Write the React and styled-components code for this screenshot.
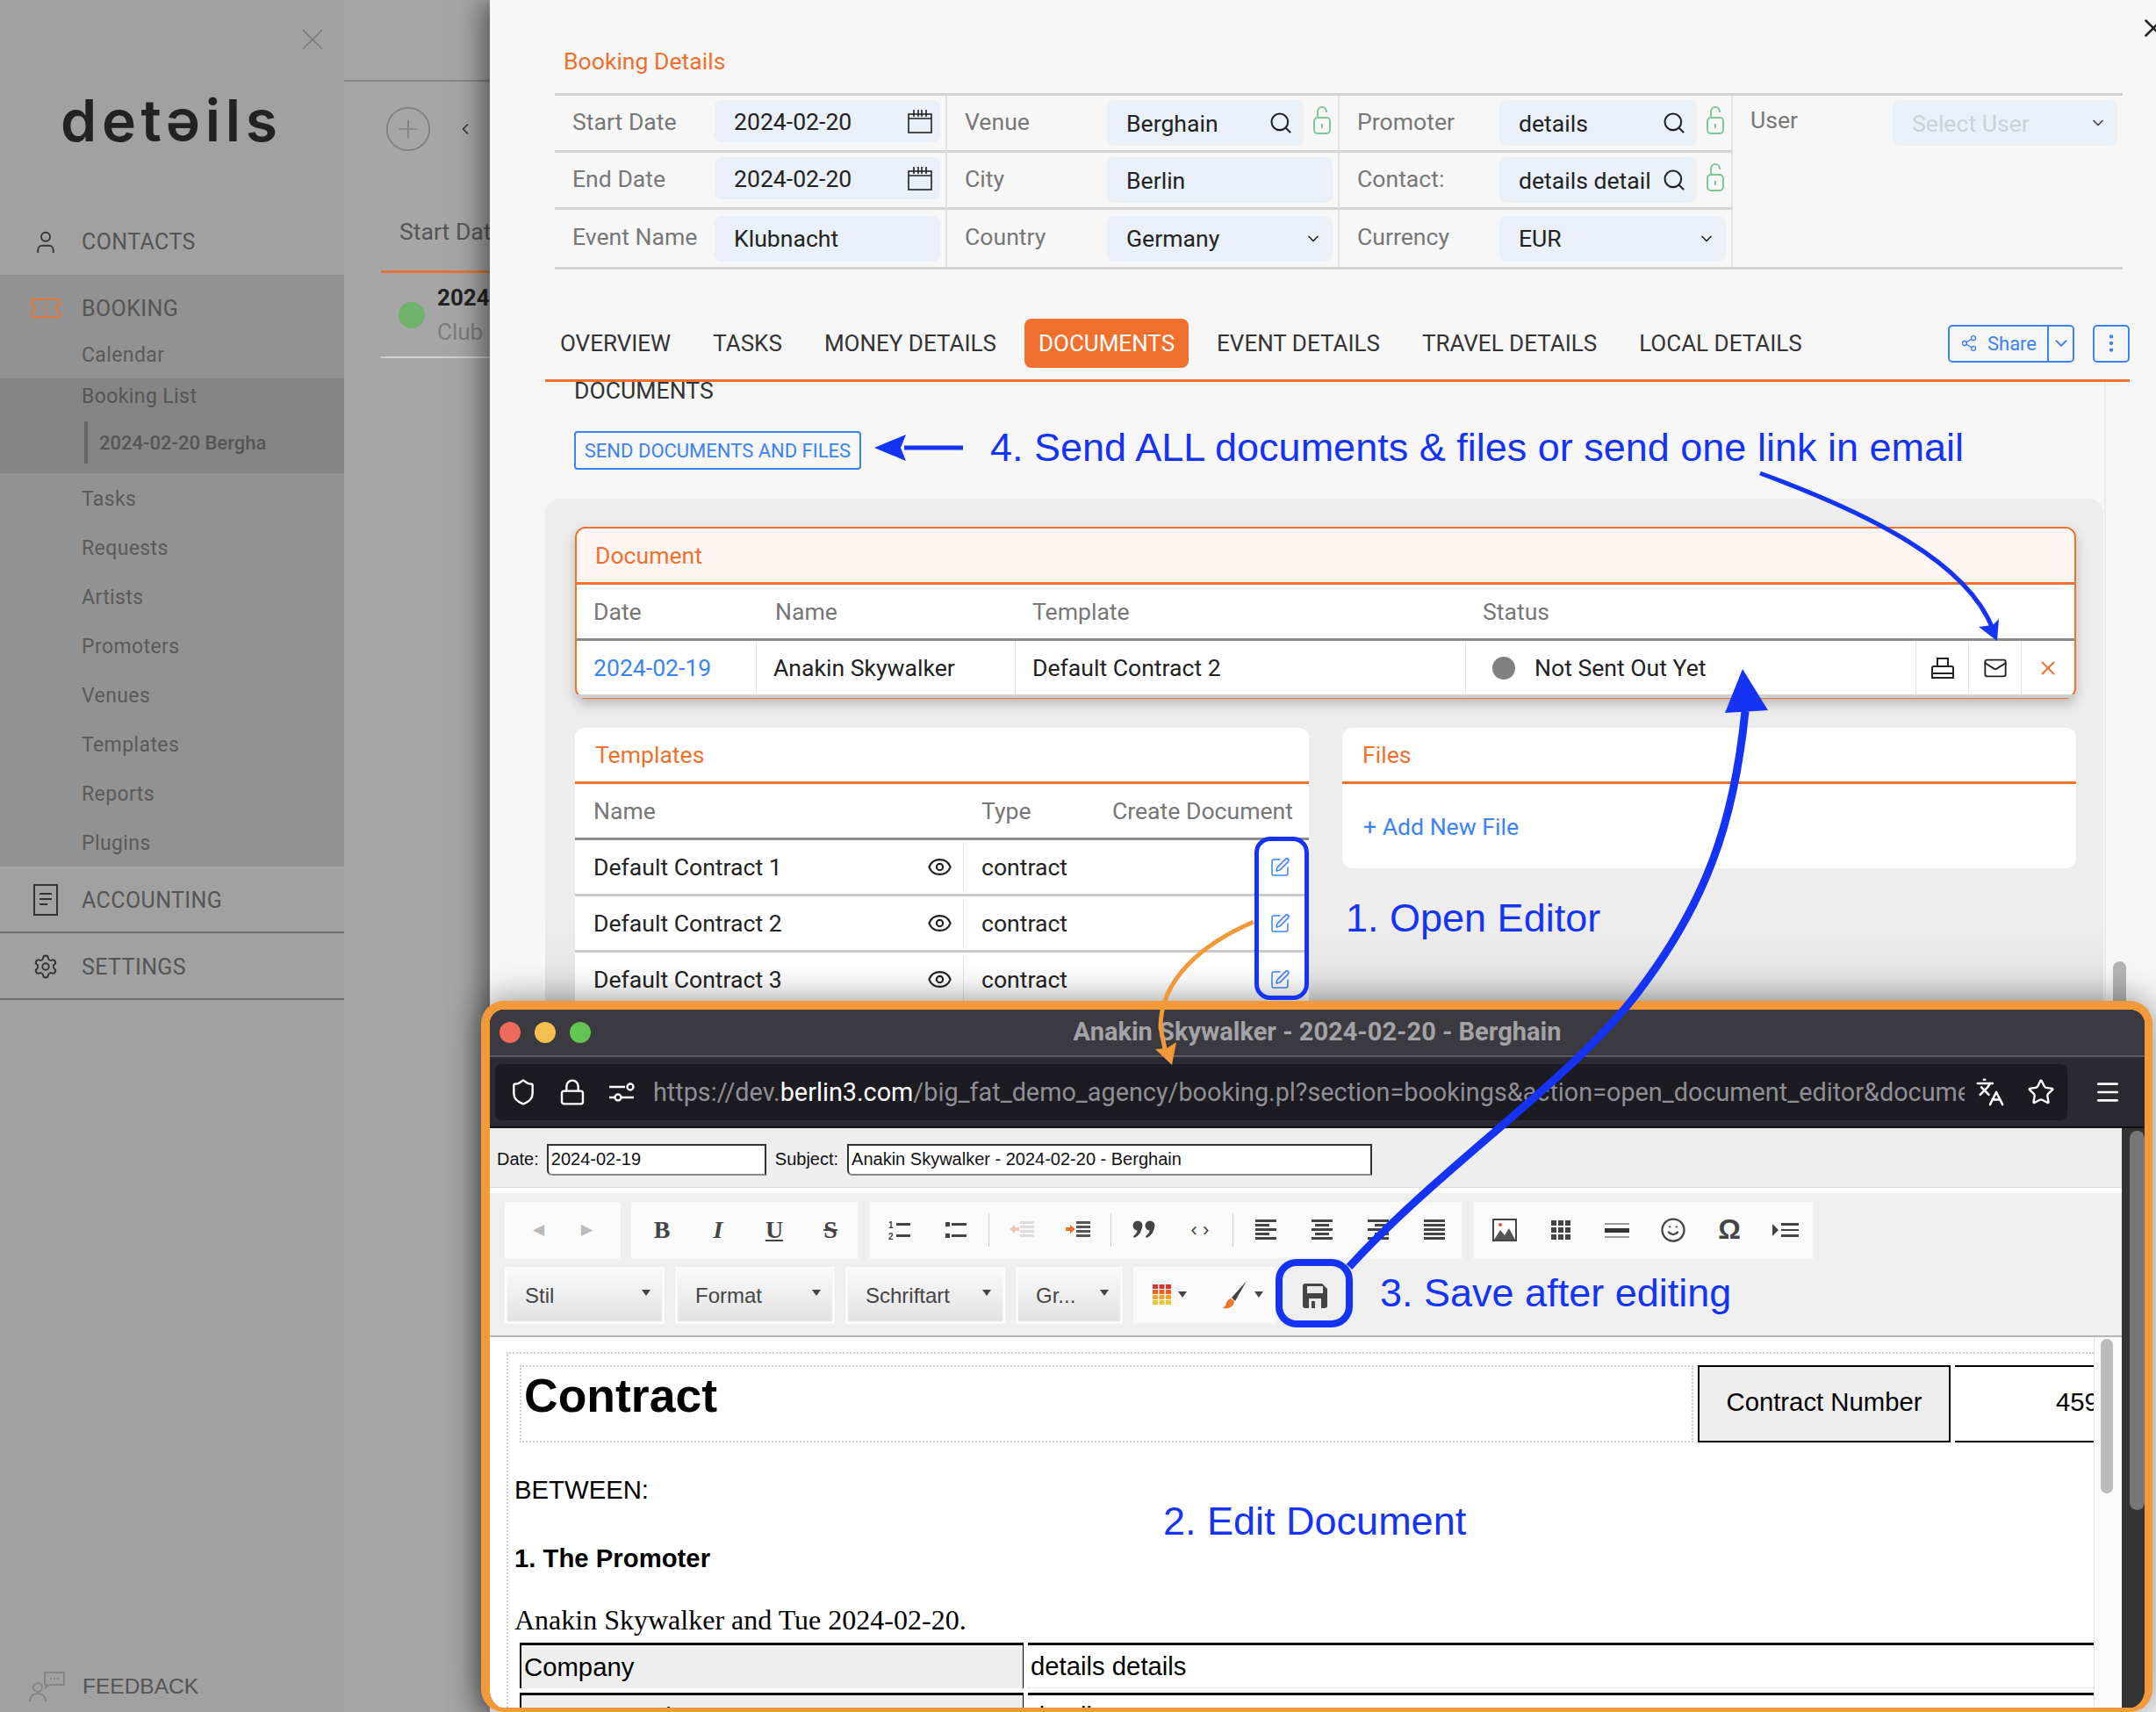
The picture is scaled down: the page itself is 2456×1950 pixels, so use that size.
import React from "react";
import styled, { createGlobalStyle } from "styled-components";
import {
  X, User, Settings, CirclePlus, ChevronLeft, ChevronDown, Search, Share2, EllipsisVertical,
  Mail, SquarePen, Eye, Shield, Lock, Languages, Star, Menu, Smile,
} from "lucide-react";

const BLUE = "#1433f5";
const LINK = "#3b82f6";
const ORANGE = "#f0702e";

const Global = createGlobalStyle`
  html, body { margin: 0; padding: 0; width: 2456px; height: 1950px; overflow: hidden; background: #f7f7f7; }
  * { box-sizing: border-box; }
  body { font-family: Roboto, "Liberation Sans", sans-serif; }
`;

const Page = styled.div`
  position: relative;
  width: 2456px;
  height: 1950px;
  display: flex;
  overflow: hidden;
`;

/* ---------- sidebar ---------- */
const Sidebar = styled.aside`
  width: 392px;
  height: 1950px;
  flex: none;
  display: flex;
  flex-direction: column;
  background: #a1a1a1;
  color: #555;
`;
const SideClose = styled.div`
  height: 60px;
  padding: 24px 15px 0 0;
  display: flex;
  justify-content: flex-end;
  color: #7d7d7d;
`;
const Logo = styled.div`
  height: 176px;
  padding: 39px 0 0 69px;
  font-family: Inter, sans-serif;
  font-weight: 600;
  font-size: 66px;
  line-height: 76px;
  letter-spacing: 5.7px;
  color: #222;
`;
const NavRow = styled.div`
  height: ${(p) => p.$h || 76}px;
  padding-top: ${(p) => p.$pt || 2}px;
  flex: none;
  display: flex;
  align-items: center;
  font-size: 25px;
  letter-spacing: 0.4px;
  border-bottom: ${(p) => (p.$line ? "2px solid #6e6e6e" : "none")};
`;
const NavIcon = styled.span`
  width: 93px;
  flex: none;
  display: flex;
  justify-content: center;
  padding-left: 11px;
  color: ${(p) => p.$c || "#333"};
`;
const BookingGroup = styled.div`
  background: #929292;
  height: 674px;
  flex: none;
`;
const SubItem = styled.div`
  height: ${(p) => p.$h || 56}px;
  padding: 2px 0 ${(p) => p.$pb || 0}px 93px;
  display: flex;
  align-items: center;
  font-size: 23px;
  letter-spacing: 0.4px;
  color: #5a5a5a;
`;
const ActiveBlock = styled.div`
  height: 108px;
  background: #858585;
  padding-left: 93px;
  color: #555;
`;
const ActiveTitle = styled.div`
  height: 40px;
  display: flex;
  align-items: center;
  font-size: 23px;
  letter-spacing: 0.4px;
`;
const ActiveChild = styled.div`
  margin: 9px 0 0 3px;
  height: 48px;
  border-left: 4px solid #666;
  padding-left: 13px;
  display: flex;
  align-items: center;
  font-size: 22px;
  font-weight: 500;
  white-space: nowrap;
`;
const Feedback = styled.div`
  margin-top: auto;
  height: 58px;
  display: flex;
  align-items: center;
  padding-left: 33px;
  gap: 19px;
  font-family: "Liberation Sans", sans-serif;
  font-size: 24.5px;
  color: #555;
`;

/* ---------- list pane behind ---------- */
const ListPane = styled.section`
  width: 166px;
  flex: none;
  height: 1950px;
  background: #a6a6a6;
  overflow: hidden;
  white-space: nowrap;
`;
const ListTop = styled.div`
  height: 93px;
  border-bottom: 2px solid #858585;
`;
const ListTools = styled.div`
  height: 108px;
  display: flex;
  align-items: center;
  padding-left: 44px;
  gap: 26px;
  color: #808080;
`;
const ListHead = styled.div`
  height: 110px;
  margin-left: 42px;
  width: 200px;
  padding: 47px 0 0 21px;
  border-bottom: 3px solid #e0763a;
  font-size: 26.6px;
  color: #555;
`;
const ListItem = styled.div`
  margin-left: 42px;
  width: 200px;
  height: 97px;
  border-bottom: 2px solid #cfcfcf;
  display: flex;
  align-items: center;
  padding-left: 20px;
  gap: 14px;
`;
const Dot = styled.span`
  width: ${(p) => p.$s}px;
  height: ${(p) => p.$s}px;
  flex: none;
  border-radius: 50%;
  margin-left: ${(p) => p.$ml || 0}px;
  background: ${(p) => p.$c};
`;
const ListText = styled.div`
  padding-top: 2px;
`;
const ListDate = styled.div`
  font-size: 26px;
  font-weight: 700;
  color: #222;
  line-height: 36px;
`;
const ListSub = styled.div`
  font-size: 26px;
  color: #7d7d7d;
  line-height: 42px;
`;

/* ---------- main panel ---------- */
const Panel = styled.main`
  position: relative;
  z-index: 1;
  flex: 1;
  height: 1950px;
  background: #f7f7f7;
  overflow: hidden;
  padding-top: 50px;
  box-shadow: -8px 0 30px rgba(0, 0, 0, 0.5);
`;
const CloseCorner = styled.div`
  position: absolute;
  right: -14px;
  top: 15px;
  color: #222;
`;
const PanelTitle = styled.h2`
  margin: 0 0 16px 84px;
  height: 40px;
  font-weight: 400;
  font-size: 26.6px;
  line-height: 40px;
  color: ${ORANGE};
`;
const FieldGrid = styled.div`
  margin-left: 74px;
  width: 1786px;
  display: grid;
  grid-template-columns: 447px 447px 448px 1fr;
  grid-template-rows: repeat(3, 65px);
  border-top: 3px solid #d4d4d4;
  border-bottom: 3px solid #d4d4d4;
`;
const Cell = styled.div`
  display: flex;
  align-items: center;
  padding: 0 6px 0 20px;
  border-right: ${(p) => (p.$last ? "none" : "2px solid #e2e2e2")};
  border-bottom: ${(p) => (p.$end ? "none" : "3px solid #d4d4d4")};
`;
const UserCell = styled(Cell)`
  grid-column: 4;
  grid-row: 1 / span 3;
  align-items: flex-start;
  padding-top: 5px;
`;
const Label = styled.span`
  width: 162px;
  flex: none;
  margin-bottom: 4px;
  font-size: 26.6px;
  color: #777;
`;
const UserLabel = styled(Label)`
  line-height: 46px;
`;
const Input = styled.div`
  flex: 1;
  min-width: 0;
  height: ${(p) => (p.$date ? 48 : 52)}px;
  margin-bottom: ${(p) => (p.$date ? 4 : 0)}px;
  display: flex;
  align-items: center;
  justify-content: space-between;
  padding: 0 ${(p) => (p.$date ? 8 : 12)}px 0 22px;
  border-radius: 8px;
  background: #eaf0f7;
  font-size: 26.6px;
  color: ${(p) => (p.$muted ? "#cdd2d8" : "#222")};
  white-space: nowrap;
`;
const LockSlot = styled.span`
  width: 33px;
  flex: none;
  display: flex;
  justify-content: flex-end;
  padding-right: 1px;
  margin-bottom: 8px;
`;
const TabBar = styled.nav`
  margin: 56px 0 0 63px;
  width: 1805px;
  height: 72px;
  display: flex;
  align-items: center;
  gap: 16px;
  padding: 0 0 13px 1px;
  border-bottom: 3px solid ${ORANGE};
`;
const Tab = styled.div`
  height: 56px;
  display: flex;
  align-items: center;
  padding: 0 16px;
  border-radius: 8px;
  font-size: 26px;
  white-space: nowrap;
  color: ${(p) => (p.$active ? "#fff" : "#333")};
  background: ${(p) => (p.$active ? ORANGE : "transparent")};
`;
const TabTools = styled.div`
  margin-left: auto;
  display: flex;
  gap: 21px;
  color: ${LINK};
`;
const ShareBtn = styled.div`
  height: 43px;
  width: 144px;
  display: flex;
  align-items: center;
  border: 2px solid ${LINK};
  border-radius: 5px;
  font-size: 22px;
`;
const SharePart = styled.span`
  flex: 1;
  display: flex;
  align-items: center;
  justify-content: center;
  gap: 11px;
`;
const ShareCaret = styled.span`
  width: 29px;
  height: 100%;
  flex: none;
  display: flex;
  align-items: center;
  justify-content: center;
  border-left: 2px solid ${LINK};
`;
const MoreBtn = styled.div`
  width: 42px;
  height: 43px;
  display: flex;
  align-items: center;
  justify-content: center;
  border: 2px solid ${LINK};
  border-radius: 5px;
`;
const Body = styled.div`
  margin-left: 63px;
  width: 1778px;
  border-right: 2px solid #ececec;
  height: 900px;
`;
const DocHeading = styled.div`
  padding-left: 33px;
  height: 22px;
  line-height: 20px;
  font-size: 26.6px;
  color: #333;
`;
const SendBtn = styled.div`
  margin: 34px 0 33px 33px;
  width: 327px;
  height: 44px;
  display: flex;
  align-items: center;
  justify-content: center;
  border: 2px solid ${LINK};
  border-radius: 4px;
  color: ${LINK};
  font-size: 22px;
  white-space: nowrap;
`;
const GreyBox = styled.div`
  width: 1775px;
  height: 620px;
  padding: 32px 31px 0 34px;
  border-radius: 16px;
  background: linear-gradient(#ededed 0, #ededed 480px, #dcdcdc 100%);
`;
const Card = styled.div`
  background: #fff;
  border-radius: 12px;
  overflow: hidden;
  flex: ${(p) => p.$flex || "none"};
`;
const DocCard = styled(Card)`
  border: 2px solid ${ORANGE};
  height: 196px;
  box-shadow: 0 6px 14px rgba(0, 0, 0, 0.22);
  overflow: visible;
`;
const CardHeader = styled.div`
  height: 64px;
  display: flex;
  align-items: center;
  padding-left: ${(p) => p.$pad || 23}px;
  border-bottom: 3px solid ${ORANGE};
  font-size: 26.6px;
  color: ${ORANGE};
  background: ${(p) => p.$bg || "#fff"};
  border-radius: ${(p) => (p.$bg ? "10px 10px 0 0" : "0")};
`;
const DocGrid = styled.div`
  display: grid;
  grid-template-columns: 205px 295px 513px 513px 60px 60px 1fr;
`;
const Th = styled.div`
  height: 64px;
  display: flex;
  align-items: center;
  padding-left: ${(p) => (p.$end ? 0 : p.$pl || 19)}px;
  font-size: 26.6px;
  color: #777;
  white-space: nowrap;
  border-bottom: 3px solid #8c8c8c;
  justify-content: ${(p) => (p.$end ? "flex-end" : "flex-start")};
  padding-right: ${(p) => (p.$end ? "18px" : "0")};
`;
const Td = styled.div`
  height: 65px;
  display: flex;
  align-items: center;
  padding-left: ${(p) => (p.$icon ? "0" : "19px")};
  justify-content: ${(p) => (p.$icon ? "center" : "flex-start")};
  gap: 22px;
  font-size: 26.6px;
  color: ${(p) => p.$c || "#222"};
  border-right: ${(p) => (p.$last ? "none" : "1px solid #e6e6e6")};
  border-bottom: 4px solid #cfcfcf;
`;
const Lower = styled.div`
  display: flex;
  gap: 38px;
  margin-top: 33px;
  align-items: flex-start;
`;
const TemplatesCard = styled(Card)`
  width: 836px;
  height: 360px;
  border-radius: 12px 12px 0 0;
`;
const TplGrid = styled.div`
  display: grid;
  grid-template-columns: 442px 1fr 226px;
`;
const TplCell = styled.div`
  height: 64px;
  display: flex;
  align-items: center;
  justify-content: ${(p) => p.$j || "flex-start"};
  padding: ${(p) => p.$p || "0 0 0 21px"};
  font-size: 26.6px;
  color: #222;
  border-bottom: 3px solid #c9c9c9;
  position: relative;
`;
const TplSep = styled.span`
  margin-left: -21px;
  margin-right: 20px;
  width: 1px;
  height: 50px;
  background: #e4e4e4;
`;
const FilesCard = styled(Card)`
  height: 160px;
`;
const AddFile = styled.div`
  padding: 33px 0 0 24px;
  font-size: 26.6px;
  color: ${LINK};
`;
const ScrollThumb = styled.div`
  position: absolute;
  z-index: 2;
  left: 2407px;
  top: 1095px;
  width: 15px;
  height: 60px;
  border-radius: 8px;
  background: #b5b5b5;
`;

/* ---------- popup window ---------- */
const Popup = styled.div`
  position: absolute;
  z-index: 5;
  left: 548px;
  top: 1140px;
  width: 1904px;
  height: 810px;
  border: solid #f2993a;
  border-width: 10px 9px 5px 10px;
  border-radius: 26px;
  background: #2b2a33;
  overflow: hidden;
  box-shadow: 0 0 40px rgba(0, 0, 0, 0.45);
  display: flex;
  flex-direction: column;
`;
const TitleBar = styled.div`
  height: 54px;
  flex: none;
  position: relative;
  background: #3b3a40;
  border-bottom: 2px solid #5a5a60;
  display: flex;
  align-items: center;
  justify-content: center;
  padding-bottom: 2px;
  font-size: 29px;
  font-weight: 700;
  color: #a3a3a6;
`;
const Lights = styled.div`
  position: absolute;
  left: 11px;
  top: 14px;
  display: flex;
  gap: 16px;
`;
const UrlRow = styled.div`
  height: 81px;
  flex: none;
  display: flex;
  align-items: center;
  padding: 0 6px;
  background: #2b2a33;
  border-bottom: 2px solid #111;
  color: #fff;
`;
const UrlBar = styled.div`
  width: 1791px;
  height: 64px;
  display: flex;
  align-items: center;
  padding-left: 4px;
  border-radius: 8px;
  background: #1c1b22;
`;
const UrlSlot = styled.span`
  width: ${(p) => p.$w || 56}px;
  flex: none;
  display: flex;
  justify-content: center;
`;
const UrlText = styled.div`
  flex: 1;
  min-width: 0;
  overflow: hidden;
  white-space: nowrap;
  margin-left: 8px;
  font-size: 28.8px;
  color: #8f8f94;
`;
const UrlDomain = styled.span`
  color: #fff;
`;
const HamburgerSlot = styled.span`
  flex: 1;
  padding-left: 9px;
  display: flex;
  justify-content: center;
`;
const PopBody = styled.div`
  flex: 1;
  min-height: 0;
  display: flex;
`;
const PopMain = styled.div`
  flex: 1;
  min-width: 0;
  display: flex;
  flex-direction: column;
  background: #eee;
  font-family: "Liberation Sans", sans-serif;
`;
const OuterScroll = styled.div`
  width: 26px;
  flex: none;
  background: #333;
  padding: 3px 0 0 9px;
`;
const OuterThumb = styled.div`
  width: 17px;
  height: 432px;
  border-radius: 9px;
  background: #777;
`;
const FormRow = styled.div`
  height: 68px;
  flex: none;
  display: flex;
  align-items: center;
  padding: 4px 0 0 8px;
  font-size: 20px;
  color: #111;
  border-bottom: 1px solid #ddd;
`;
const FormLabel = styled.span`
  flex: none;
  margin-left: ${(p) => p.$ml || 0}px;
`;
const FormInput = styled.div`
  width: ${(p) => p.$w}px;
  height: 36px;
  margin: ${(p) => p.$m};
  display: flex;
  align-items: center;
  padding-left: 3px;
  background: #fff;
  border: 2px solid #333;
  border-bottom-color: #888;
  border-bottom-left-radius: 6px;
  font-size: 20px;
  color: #111;
`;
const WhiteBand = styled.div`
  height: 6px;
  flex: none;
  background: #fff;
`;
const EditorBar = styled.div`
  height: 162px;
  flex: none;
  padding: 10px 0 0 17px;
  background: #efefef;
  display: flex;
  flex-direction: column;
  gap: 9px;
`;
const BarRow = styled.div`
  display: flex;
  gap: 12px;
  height: 65px;
`;
const BtnGroup = styled.div`
  display: flex;
  align-items: center;
  background: #fafafa;
  border-bottom: 2px solid #f6f6f6;
  padding: ${(p) => p.$p || "0 1px"};
`;
const TbBtn = styled.span`
  width: ${(p) => p.$w || 64}px;
  height: 100%;
  flex: none;
  display: flex;
  align-items: center;
  justify-content: center;
  color: ${(p) => p.$c || "#444"};
  font-family: ${(p) => (p.$serif ? '"Liberation Serif", serif' : '"Liberation Sans", sans-serif')};
  font-size: ${(p) => p.$fs || 28}px;
  font-weight: ${(p) => (p.$b ? 700 : 400)};
  font-style: ${(p) => (p.$i ? "italic" : "normal")};
`;
const Deco = styled.span`
  text-decoration: ${(p) => p.$d};
  font-weight: 700;
`;
const TbSep = styled.span`
  width: 1px;
  height: 38px;
  margin: 0 5px;
  flex: none;
  background: #ccc;
`;
const Combo = styled.div`
  width: ${(p) => p.$w}px;
  height: 65px;
  position: relative;
  padding: 0 0 0 20px;
  display: flex;
  align-items: center;
  font-size: 24px;
  color: #444;
  background: linear-gradient(#fafafa, #e2e2e2);
  border: 3px solid #fafafa;
`;
const Caret = styled.span`
  width: 0;
  height: 0;
  border-left: 5px solid transparent;
  border-right: 5px solid transparent;
  border-top: 7px solid ${(p) => p.$c || "#444"};
  flex: none;
`;
const ComboCaret = styled(Caret)`
  position: absolute;
  right: 13px;
  top: 23px;
`;
const ColorGroup = styled(BtnGroup)`
  width: 162px;
  gap: 7px;
  padding-left: 22px;
`;
const ColorSpacer = styled.span`
  width: 26px;
  flex: none;
`;
const SaveSlot = styled.span`
  margin-left: -3px;
  width: 72px;
  display: flex;
  align-items: center;
  justify-content: center;
`;
const EditorRule = styled.div`
  height: 2px;
  flex: none;
  background: #b5b5b5;
`;
const DocArea = styled.div`
  flex: 1;
  min-height: 0;
  display: flex;
  background: #fff;
  color: #000;
`;
const DocPage = styled.div`
  flex: 1;
  min-width: 0;
  overflow: hidden;
  padding: 17px 0 0 19px;
  white-space: nowrap;
`;
const Dotted = styled.div`
  border-top: 2px dotted #ccc;
  border-left: 2px dotted #ccc;
  padding: 13px 0 0 7px;
  height: 420px;
`;
const HeadTable = styled.div`
  margin-left: 6px;
  height: 90px;
  width: 1830px;
  display: flex;
  gap: 5px;
`;
const HeadMain = styled.div`
  width: 1337px;
  height: 88px;
  border: 2px dotted #ccc;
  padding: 8px 0 0 3px;
  font-size: 53.5px;
  font-weight: 700;
  line-height: 50px;
`;
const HeadLabel = styled.div`
  width: 288px;
  height: 88px;
  padding-bottom: 4px;
  display: flex;
  align-items: center;
  justify-content: center;
  background: #eee;
  border: 2px solid #000;
  font-size: 29.3px;
`;
const HeadValue = styled.div`
  flex: 1;
  height: 88px;
  border: solid #000;
  border-width: 2px 0;
  padding: 0 0 4px 115px;
  display: flex;
  align-items: center;
  font-size: 29.3px;
`;
const Para = styled.div`
  height: 40px;
  margin-top: ${(p) => p.$mt}px;
  line-height: 40px;
  font-size: ${(p) => p.$fs || 29.3}px;
  font-weight: ${(p) => (p.$b ? 700 : 400)};
  font-family: ${(p) => (p.$serif ? '"Liberation Serif", serif' : "inherit")};
`;
const KvRow = styled.div`
  margin: ${(p) => p.$m};
  display: flex;
  gap: 5px;
  height: 52px;
  font-size: 29.3px;
`;
const KvKey = styled.div`
  width: 574px;
  flex: none;
  padding-left: 3px;
  display: flex;
  align-items: center;
  background: #eee;
  border: solid #000;
  border-width: 3px 1px 0 2px;
`;
const KvVal = styled.div`
  flex: 1;
  padding-left: 3px;
  display: flex;
  align-items: center;
  border-top: 3px solid #000;
  border-bottom: 1px dotted #ccc;
`;
const InnerScroll = styled.div`
  width: 32px;
  flex: none;
  background: #fafafa;
  border-left: 1px solid #e4e4e4;
  padding: 2px 0 0 7px;
`;
const InnerThumb = styled.div`
  width: 14px;
  height: 176px;
  border-radius: 7px;
  background: #bcbcbc;
`;

/* ---------- annotations ---------- */
const Note = styled.div`
  position: absolute;
  z-index: 7;
  left: ${(p) => p.$x}px;
  top: ${(p) => p.$y}px;
  font-family: "Liberation Sans", sans-serif;
  font-size: 45px;
  line-height: 56px;
  color: ${BLUE};
  white-space: nowrap;
`;
const Highlight = styled.div`
  position: absolute;
  z-index: 6;
  left: ${(p) => p.$x}px;
  top: ${(p) => p.$y}px;
  width: ${(p) => p.$w}px;
  height: ${(p) => p.$h}px;
  border: ${(p) => p.$b}px solid ${BLUE};
  border-radius: ${(p) => p.$r}px;
`;
const Arrows = styled.svg`
  position: absolute;
  z-index: 6;
  left: 0;
  top: 0;
  pointer-events: none;
`;

/* ---------- small drawn icons ---------- */
const Ticket = () => (
  <svg width="34" height="24" viewBox="0 0 34 24" fill="none" stroke="#e0763a" strokeWidth="2">
    <path d="M1 2h32v6a4 4 0 0 0 0 8v6H1v-6a4 4 0 0 0 0-8z" />
    <path d="M17 7v2M17 12v2M17 17v2" />
  </svg>
);
const DocIcon = () => (
  <svg width="28" height="36" viewBox="0 0 28 36" fill="none" stroke="#333" strokeWidth="2">
    <rect x="1" y="1" width="26" height="34" />
    <path d="M7 11h14M7 17h14M7 23h9" />
  </svg>
);
const FeedbackIcon = () => (
  <svg width="42" height="36" viewBox="0 0 42 36" fill="none" stroke="#858585" strokeWidth="2">
    <circle cx="10" cy="19" r="5" />
    <path d="M1 35c0-6 4-9 9-9s9 3 9 9" />
    <path d="M18 2h22v14H24l-5 3 1-3h-2z" />
    <path d="M24 9h2M28 9h2M32 9h2" />
  </svg>
);
const Calendar = () => (
  <svg width="30" height="28" viewBox="0 0 30 28" fill="none" stroke="#222" strokeWidth="1.6">
    <rect x="2" y="6" width="26" height="21" />
    <path d="M2 11h26M8 1v8M13 1v8M17 1v8M22 1v8" />
  </svg>
);
const GreenLock = () => (
  <svg width="22" height="34" viewBox="0 0 22 34" fill="none" stroke="#7cc89a" strokeWidth="2">
    <rect x="2" y="15" width="18" height="18" rx="4" />
    <path d="M6 15V8a5 5 0 0 1 10 0v1" />
    <path d="M11 22v5" />
  </svg>
);
const Sliders = () => (
  <svg width="30" height="24" viewBox="0 0 30 24" fill="none" stroke="#fff" strokeWidth="2.4">
    <path d="M1 6h18M1 18h6M15 18h14" />
    <circle cx="25" cy="6" r="3.5" />
    <circle cx="11" cy="18" r="3.5" />
  </svg>
);
const PrintIcon = () => (
  <svg width="26" height="26" viewBox="0 0 26 26" fill="none" stroke="#222" strokeWidth="2">
    <path d="M7 11V2h12v9" />
    <path d="M1 24V13a2 2 0 0 1 2-2h20a2 2 0 0 1 2 2v11z" />
    <path d="M1 19h24" />
  </svg>
);
const QuoteIcon = () => (
  <svg width="28" height="24" viewBox="0 0 28 24" fill="#444">
    <circle cx="7" cy="7" r="5.5" />
    <path d="M12 7c0 7-4 12-9 14l-1-2c3-2 5-5 5-10z" />
    <circle cx="21" cy="7" r="5.5" />
    <path d="M26 7c0 7-4 12-9 14l-1-2c3-2 5-5 5-10z" />
  </svg>
);
const SaveIcon = () => (
  <svg width="30" height="30" viewBox="0 0 30 30">
    <path d="M4 1h19l6 6v19a3 3 0 0 1-3 3H4a3 3 0 0 1-3-3V4a3 3 0 0 1 3-3z" fill="#444" />
    <rect x="6" y="4" width="18" height="8" fill="#e8e8e8" />
    <rect x="8" y="18" width="14" height="11" fill="#e8e8e8" />
    <rect x="11" y="21" width="4" height="8" fill="#444" />
  </svg>
);
const Lines = ({ rows, w = 24 }) => (
  <svg width={w} height="26" viewBox={`0 0 ${w} 26`} fill="#444">
    {rows.map(([x, wd], i) => (
      <rect key={i} x={x} y={1 + i * 5} width={wd} height="3" />
    ))}
  </svg>
);
const NumList = () => (
  <svg width="26" height="24" viewBox="0 0 26 24" fill="#444">
    <rect x="9" y="4" width="16" height="3" />
    <rect x="9" y="17" width="16" height="3" />
    <text x="0" y="10" fontSize="10" fontWeight="700">1</text>
    <text x="0" y="23" fontSize="10" fontWeight="700">2</text>
  </svg>
);
const BulList = () => (
  <svg width="26" height="24" viewBox="0 0 26 24" fill="#444">
    <rect x="8" y="4" width="17" height="3" />
    <rect x="8" y="17" width="17" height="3" />
    <rect x="1" y="3" width="5" height="5" />
    <rect x="1" y="16" width="5" height="5" />
  </svg>
);
const Indent = ({ c, flip }) => (
  <svg width="30" height="24" viewBox="0 0 30 24">
    <g fill={flip ? "#ddd" : "#555"}>
      <rect x="13" y="2" width="16" height="3" />
      <rect x="13" y="7" width="16" height="3" />
      <rect x="13" y="12" width="16" height="3" />
      <rect x="13" y="17" width="16" height="3" />
    </g>
    <path d={flip ? "M1 11l6-5v3h5v4H7v3z" : "M12 11L6 6v3H1v4h5v3z"} fill={c} />
  </svg>
);
const ImageIcon = () => (
  <svg width="28" height="26" viewBox="0 0 28 26">
    <rect x="1" y="1" width="26" height="24" fill="#fff" stroke="#444" strokeWidth="2" />
    <path d="M2 24l7-11 5 6 5-8 7 13z" fill="#555" />
    <circle cx="9" cy="7" r="2" fill="#e8502a" />
  </svg>
);
const TableIcon = () => (
  <svg width="24" height="24" viewBox="0 0 24 24" fill="#444">
    {[0, 1, 2].flatMap((r) =>
      [0, 1, 2].map((c) => <rect key={`${r}${c}`} x={1 + c * 8} y={1 + r * 8} width="6" height="6" />)
    )}
  </svg>
);
const HrIcon = () => (
  <svg width="28" height="22" viewBox="0 0 28 22">
    <rect y="3" width="28" height="2" fill="#999" />
    <rect y="9" width="28" height="5" fill="#333" />
    <rect y="18" width="28" height="2" fill="#999" />
  </svg>
);
const BlockIcon = () => (
  <svg width="32" height="22" viewBox="0 0 32 22" fill="#444">
    <path d="M1 4l7 7-7 7z" />
    <rect x="11" y="3" width="20" height="3" />
    <rect x="11" y="10" width="20" height="2" />
    <rect x="11" y="16" width="20" height="3" />
  </svg>
);
const Swatches = () => (
  <svg width="22" height="24" viewBox="0 0 22 24">
    {[0, 1, 2, 3].flatMap((r) =>
      [0, 1, 2].map((c) => (
        <rect
          key={`${r}${c}`}
          x={c * 7.5}
          y={r * 6}
          width="6"
          height="5"
          fill={["#d9342b", "#e8622a", "#f1a62b", "#e8c53a"][r]}
        />
      ))
    )}
  </svg>
);
const Brush = () => (
  <svg width="30" height="34" viewBox="0 0 30 34">
    <path d="M28 1L11 20l4 4z" fill="#444" />
    <path d="M10 21c-4 1-5 5-6 8l-3 3c6 1 13-1 13-8z" fill="#e8762f" />
  </svg>
);

/* ---------- data ---------- */
const SUB_ITEMS = ["Tasks", "Requests", "Artists", "Promoters", "Venues", "Templates", "Reports", "Plugins"];
const TABS = ["OVERVIEW", "TASKS", "MONEY DETAILS", "DOCUMENTS", "EVENT DETAILS", "TRAVEL DETAILS", "LOCAL DETAILS"];
const TEMPLATES = ["Default Contract 1", "Default Contract 2", "Default Contract 3"];
const URL_TAIL =
  "/big_fat_demo_agency/booking.pl?section=bookings&action=open_document_editor&document_id=1&booking=459";

export default function App() {
  return (
    <Page>
      <Global />
      <Sidebar>
        <SideClose>
          <X size={42} strokeWidth={1} />
        </SideClose>
        <Logo>detəils</Logo>
        <NavRow $h={77}>
          <NavIcon><User size={30} strokeWidth={1.5} /></NavIcon>
          CONTACTS
        </NavRow>
        <BookingGroup>
          <NavRow $h={70} $pt={6}>
            <NavIcon><Ticket /></NavIcon>
            BOOKING
          </NavRow>
          <SubItem $h={48} $pb={8}>Calendar</SubItem>
          <ActiveBlock>
            <ActiveTitle>Booking List</ActiveTitle>
            <ActiveChild>2024-02-20 Bergha</ActiveChild>
          </ActiveBlock>
          {SUB_ITEMS.map((s) => (
            <SubItem key={s}>{s}</SubItem>
          ))}
        </BookingGroup>
        <NavRow $line>
          <NavIcon><DocIcon /></NavIcon>
          ACCOUNTING
        </NavRow>
        <NavRow $line>
          <NavIcon><Settings size={30} strokeWidth={1.5} /></NavIcon>
          SETTINGS
        </NavRow>
        <Feedback>
          <FeedbackIcon />
          FEEDBACK
        </Feedback>
      </Sidebar>

      <ListPane>
        <ListTop />
        <ListTools>
          <CirclePlus size={58} strokeWidth={0.7} />
          <ChevronLeft size={20} color="#333" />
        </ListTools>
        <ListHead>Start Date</ListHead>
        <ListItem>
          <Dot $s={30} $c="#6fb36a" />
          <ListText>
            <ListDate>2024-02-20</ListDate>
            <ListSub>Club</ListSub>
          </ListText>
        </ListItem>
      </ListPane>

      <Panel>
        <CloseCorner><X size={34} strokeWidth={1.8} /></CloseCorner>
        <PanelTitle>Booking Details</PanelTitle>
        <FieldGrid>
          <Cell>
            <Label>Start Date</Label>
            <Input $date>2024-02-20<Calendar /></Input>
          </Cell>
          <Cell>
            <Label>Venue</Label>
            <Input>Berghain<Search size={28} strokeWidth={1.8} /></Input>
            <LockSlot><GreenLock /></LockSlot>
          </Cell>
          <Cell>
            <Label>Promoter</Label>
            <Input>details<Search size={28} strokeWidth={1.8} /></Input>
            <LockSlot><GreenLock /></LockSlot>
          </Cell>
          <UserCell $last $end>
            <UserLabel>User</UserLabel>
            <Input $muted>Select User<ChevronDown size={20} color="#444" /></Input>
          </UserCell>
          <Cell>
            <Label>End Date</Label>
            <Input $date>2024-02-20<Calendar /></Input>
          </Cell>
          <Cell>
            <Label>City</Label>
            <Input>Berlin</Input>
          </Cell>
          <Cell>
            <Label>Contact:</Label>
            <Input>details detail<Search size={28} strokeWidth={1.8} /></Input>
            <LockSlot><GreenLock /></LockSlot>
          </Cell>
          <Cell $end>
            <Label>Event Name</Label>
            <Input>Klubnacht</Input>
          </Cell>
          <Cell $end>
            <Label>Country</Label>
            <Input>Germany<ChevronDown size={20} /></Input>
          </Cell>
          <Cell $end>
            <Label>Currency</Label>
            <Input>EUR<ChevronDown size={20} /></Input>
          </Cell>
        </FieldGrid>

        <TabBar>
          {TABS.map((t) => (
            <Tab key={t} $active={t === "DOCUMENTS"}>{t}</Tab>
          ))}
          <TabTools>
            <ShareBtn>
              <SharePart><Share2 size={20} strokeWidth={1.6} />Share</SharePart>
              <ShareCaret><ChevronDown size={22} /></ShareCaret>
            </ShareBtn>
            <MoreBtn><EllipsisVertical size={26} /></MoreBtn>
          </TabTools>
        </TabBar>

        <Body>
          <DocHeading>DOCUMENTS</DocHeading>
          <SendBtn>SEND DOCUMENTS AND FILES</SendBtn>
          <GreyBox>
            <DocCard>
              <CardHeader $bg="#fff5f2" $pad={21}>Document</CardHeader>
              <DocGrid>
                <Th>Date</Th>
                <Th $pl={21}>Name</Th>
                <Th>Template</Th>
                <Th>Status</Th>
                <Th />
                <Th />
                <Th />
                <Td $c={LINK}>2024-02-19</Td>
                <Td>Anakin Skywalker</Td>
                <Td>Default Contract 2</Td>
                <Td><Dot $s={26} $ml={11} $c="#808080" />Not Sent Out Yet</Td>
                <Td $icon><PrintIcon /></Td>
                <Td $icon><Mail size={28} strokeWidth={1.6} /></Td>
                <Td $icon $last $c={ORANGE}><X size={26} strokeWidth={1.8} /></Td>
              </DocGrid>
            </DocCard>
            <Lower>
              <TemplatesCard>
                <CardHeader>Templates</CardHeader>
                <TplGrid>
                  <Th $pl={21}>Name</Th>
                  <Th $pl={21}>Type</Th>
                  <Th $end>Create Document</Th>
                  {TEMPLATES.flatMap((t) => [
                    <TplCell key={t} $j="space-between" $p="0 12px 0 21px">
                      {t}
                      <Eye size={29} strokeWidth={1.8} />
                    </TplCell>,
                    <TplCell key={`${t}-t`}>
                      <TplSep />
                      contract
                    </TplCell>,
                    <TplCell key={`${t}-e`} $j="flex-end" $p="0 21px 0 0">
                      <SquarePen size={24} strokeWidth={1.5} color={LINK} />
                    </TplCell>,
                  ])}
                </TplGrid>
              </TemplatesCard>
              <FilesCard $flex="1">
                <CardHeader>Files</CardHeader>
                <AddFile>+ Add New File</AddFile>
              </FilesCard>
            </Lower>
          </GreyBox>
        </Body>
      </Panel>

      <ScrollThumb />

      <Popup>
        <TitleBar>
          <Lights>
            <Dot $s={24} $c="#ee6a5f" />
            <Dot $s={24} $c="#f5bf4f" />
            <Dot $s={24} $c="#61c454" />
          </Lights>
          Anakin Skywalker - 2024-02-20 - Berghain
        </TitleBar>
        <UrlRow>
          <UrlBar>
            <UrlSlot><Shield size={32} strokeWidth={1.8} /></UrlSlot>
            <UrlSlot><Lock size={32} strokeWidth={1.8} /></UrlSlot>
            <UrlSlot><Sliders /></UrlSlot>
            <UrlText>https://dev.<UrlDomain>berlin3.com</UrlDomain>{URL_TAIL}</UrlText>
            <UrlSlot $w={57}><Languages size={34} strokeWidth={1.8} /></UrlSlot>
            <UrlSlot $w={60}><Star size={32} strokeWidth={1.8} /></UrlSlot>
          </UrlBar>
          <HamburgerSlot><Menu size={32} strokeWidth={2} /></HamburgerSlot>
        </UrlRow>
        <PopBody>
          <PopMain>
            <FormRow>
              <FormLabel>Date:</FormLabel>
              <FormInput $w={250} $m="0 0 0 9px">2024-02-19</FormInput>
              <FormLabel $ml={10}>Subject:</FormLabel>
              <FormInput $w={598} $m="0 0 0 10px">Anakin Skywalker - 2024-02-20 - Berghain</FormInput>
            </FormRow>
            <WhiteBand />
            <EditorBar>
              <BarRow>
                <BtnGroup $p="0 11px">
                  <TbBtn $w={55} $c="#bbb" $fs={17}>◀</TbBtn>
                  <TbBtn $w={55} $c="#bbb" $fs={17}>▶</TbBtn>
                </BtnGroup>
                <BtnGroup $p="0 0 0 3px">
                  <TbBtn $serif $b>B</TbBtn>
                  <TbBtn $serif $b $i>I</TbBtn>
                  <TbBtn $serif><Deco $d="underline">U</Deco></TbBtn>
                  <TbBtn $serif><Deco $d="line-through">S</Deco></TbBtn>
                </BtnGroup>
                <BtnGroup $p="0 0 0 3px">
                  <TbBtn><NumList /></TbBtn>
                  <TbBtn><BulList /></TbBtn>
                  <TbSep />
                  <TbBtn><Indent c="#f4c8a8" flip /></TbBtn>
                  <TbBtn><Indent c="#e8762f" /></TbBtn>
                  <TbSep />
                  <TbBtn><QuoteIcon /></TbBtn>
                  <TbBtn $fs={22}>‹ ›</TbBtn>
                  <TbSep />
                  <TbBtn><Lines rows={[[0, 24], [0, 16], [0, 24], [0, 16], [0, 24]]} /></TbBtn>
                  <TbBtn><Lines rows={[[0, 24], [4, 16], [0, 24], [4, 16], [0, 24]]} /></TbBtn>
                  <TbBtn><Lines rows={[[0, 24], [8, 16], [0, 24], [8, 16], [0, 24]]} /></TbBtn>
                  <TbBtn><Lines rows={[[0, 24], [0, 24], [0, 24], [0, 24], [0, 24]]} /></TbBtn>
                </BtnGroup>
                <BtnGroup $p="0 0 0 4px">
                  <TbBtn><ImageIcon /></TbBtn>
                  <TbBtn><TableIcon /></TbBtn>
                  <TbBtn><HrIcon /></TbBtn>
                  <TbBtn><Smile size={30} strokeWidth={1.8} /></TbBtn>
                  <TbBtn $b $fs={32}>Ω</TbBtn>
                  <TbBtn><BlockIcon /></TbBtn>
                </BtnGroup>
              </BarRow>
              <BarRow>
                <Combo $w={182}>Stil<ComboCaret /></Combo>
                <Combo $w={182}>Format<ComboCaret /></Combo>
                <Combo $w={182}>Schriftart<ComboCaret /></Combo>
                <Combo $w={122}>Gr...<ComboCaret /></Combo>
                <ColorGroup>
                  <Swatches />
                  <Caret />
                  <ColorSpacer />
                  <Brush />
                  <Caret />
                </ColorGroup>
                <SaveSlot><SaveIcon /></SaveSlot>
              </BarRow>
            </EditorBar>
            <EditorRule />
            <DocArea>
              <DocPage>
                <Dotted>
                  <HeadTable>
                    <HeadMain>Contract</HeadMain>
                    <HeadLabel>Contract Number</HeadLabel>
                    <HeadValue>459</HeadValue>
                  </HeadTable>
                  <Para $mt={32}>BETWEEN:</Para>
                  <Para $mt={38} $b>1. The Promoter</Para>
                  <Para $mt={30} $serif $fs={32}>Anakin Skywalker and Tue 2024-02-20.</Para>
                  <KvRow $m="6px 0 0 6px">
                    <KvKey>Company</KvKey>
                    <KvVal>details details</KvVal>
                  </KvRow>
                  <KvRow $m="5px 0 0 6px">
                    <KvKey>Represented By</KvKey>
                    <KvVal>details</KvVal>
                  </KvRow>
                </Dotted>
              </DocPage>
              <InnerScroll><InnerThumb /></InnerScroll>
            </DocArea>
          </PopMain>
          <OuterScroll><OuterThumb /></OuterScroll>
        </PopBody>
      </Popup>

      <Arrows width="2456" height="1950" viewBox="0 0 2456 1950" fill="none">
        <path d="M1097 510H1030" stroke={BLUE} strokeWidth="5" />
        <path d="M996 510L1032 495L1026 510L1032 525Z" fill={BLUE} />
        <path d="M2005 539C2130 585 2240 640 2270 716" stroke={BLUE} strokeWidth="5" />
        <path d="M2275 730L2254 714L2270 712L2277 705Z" fill={BLUE} />
        <path d="M1537 1443C1640 1330 1790 1230 1866 1130S1975 940 1988 810" stroke={BLUE} strokeWidth="9" />
        <path d="M1985 762L1965 812L2014 809Z" fill={BLUE} />
        <path d="M1428 1050C1370 1075 1322 1115 1322 1170L1327 1195" stroke="#f2993a" strokeWidth="5" />
        <path d="M1335 1213L1316 1195L1329 1194L1340 1187Z" fill="#f2993a" />
      </Arrows>
      <Highlight $x={1429} $y={953} $w={62} $h={186} $b={5} $r={18} />
      <Highlight $x={1453} $y={1434} $w={88} $h={78} $b={8} $r={24} />
      <Note $x={1128} $y={482}>4. Send ALL documents &amp; files or send one link in email</Note>
      <Note $x={1533} $y={1018}>1. Open Editor</Note>
      <Note $x={1572} $y={1445}>3. Save after editing</Note>
      <Note $x={1325} $y={1705}>2. Edit Document</Note>
    </Page>
  );
}
